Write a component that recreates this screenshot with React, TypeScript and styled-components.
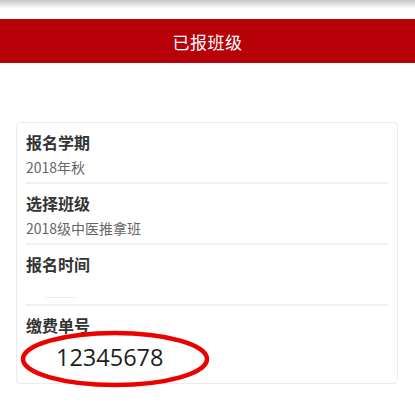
import React from "react";
import styled, { createGlobalStyle } from "styled-components";

const Global = createGlobalStyle`
  html, body { margin: 0; padding: 0; background: #fff; }
  body { font-family: "Noto Sans CJK SC", "Noto Sans", sans-serif; }
`;

const Page = styled.div`
  width: 415px;
  min-height: 405px;
  background: #fff;
  overflow: hidden;
`;

const TopShade = styled.div`
  height: 9px;
  background: linear-gradient(#c3c7cb, #e6e8ea 55%, #fff);
`;

const Header = styled.header`
  margin-top: 10px;
  height: 44px;
  background: #b70008;
  display: flex;
  align-items: center;
  justify-content: center;
  color: #fff;
  font-size: 17px;
  letter-spacing: 0.5px;
`;

const Card = styled.section`
  margin: 59px 17px 0 16px;
  border: 1px solid #ebebeb;
  border-radius: 4px;
  padding: 0 9px;
`;

const Item = styled.div<{ $first?: boolean; $last?: boolean }>`
  position: relative;
  display: flex;
  flex-direction: column;
  border-top: 2px solid ${(p) => (p.$first ? "transparent" : "#f0f0f0")};
  padding: ${(p) => (p.$first ? "7px 0 5px" : "9px 0 5px")};
  ${(p) => (p.$last ? "padding-bottom: 11px;" : "")}
`;

const Label = styled.div`
  height: 20px;
  line-height: 20px;
  font-size: 16px;
  font-weight: 700;
  color: #333;
`;

const Value = styled.div`
  margin-top: 5px;
  height: 20px;
  line-height: 20px;
  font-size: 14px;
  color: #666;
  display: flex;
  align-items: flex-end;
`;

const EmptyLine = styled.span`
  margin-left: 19px;
  width: 32px;
  border-bottom: 1px solid #eeeeee;
  margin-bottom: 1px;
`;

const Number = styled.div`
  margin-top: 7px;
  margin-left: 30px;
  height: 30px;
  line-height: 30px;
  font-family: "Open Sans", "Liberation Sans", sans-serif;
  font-size: 23.5px;
  color: #1e1e1e;
`;

const Ring = styled.svg`
  position: absolute;
  left: -6px;
  top: 24px;
  pointer-events: none;
`;

export default function App() {
  return (
    <Page>
      <Global />
      <TopShade />
      <Header>已报班级</Header>
      <Card>
        <Item $first>
          <Label>报名学期</Label>
          <Value>2018年秋</Value>
        </Item>
        <Item>
          <Label>选择班级</Label>
          <Value>2018级中医推拿班</Value>
        </Item>
        <Item>
          <Label>报名时间</Label>
          <Value>
            <EmptyLine />
          </Value>
        </Item>
        <Item $last>
          <Label>缴费单号</Label>
          <Number>12345678</Number>
          <Ring width="190" height="58" viewBox="0 0 190 58">
            <ellipse cx="95" cy="29" rx="92" ry="26" fill="none" stroke="#ec0000" strokeWidth="4.5" />
          </Ring>
        </Item>
      </Card>
    </Page>
  );
}
